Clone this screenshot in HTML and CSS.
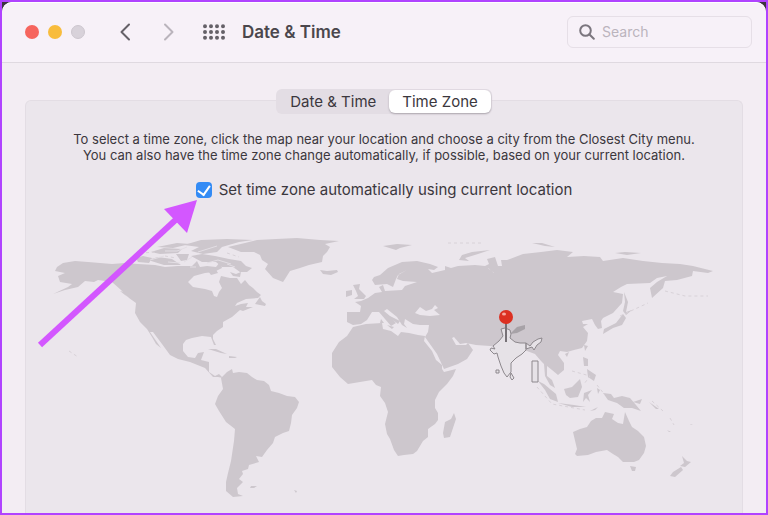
FILE: index.html
```html
<!DOCTYPE html>
<html lang="en">
<head>
<meta charset="utf-8">
<meta name="viewport" content="width=device-width, initial-scale=1">
<title>Date &amp; Time</title>
<link rel="stylesheet" href="styles.css">
</head>
<body>
<div class="frame">
<div class="window">
  <header class="toolbar">
    <div class="lights">
      <button class="light close" aria-label="Close"></button>
      <button class="light minimize" aria-label="Minimize"></button>
      <button class="light zoom" aria-label="Zoom" disabled></button>
    </div>
    <nav class="nav">
      <button class="icon-button" aria-label="Back"><svg width="12" height="18" viewBox="0 0 12 18"><path d="M10 1.500 2.500 9l7.500 7.500" /></svg></button>
      <button class="icon-button forward" aria-label="Forward"><svg width="12" height="18" viewBox="0 0 12 18"><path d="M2 1.500 9.500 9 2 16.500" /></svg></button>
    </nav>
    <button class="icon-button grid" aria-label="Show all">
      <svg width="22" height="16" viewBox="0 0 22 16"><path d="M2 2.300h18.500M2 8h18.500M2 13.700h18.500" /></svg>
    </button>
    <h1 class="title">Date &amp; Time</h1>
    <label class="search">
      <svg width="16" height="16" viewBox="0 0 16 16"><circle cx="6.500" cy="6.500" r="5.300"/><path d="m10.500 10.500 4.300 4.300"/></svg>
      <input type="search" placeholder="Search" aria-label="Search">
    </label>
  </header>
  <main class="content">
    <section class="panel">
      <div class="tabs" role="tablist">
        <button class="tab" role="tab" aria-selected="false">Date &amp; Time</button>
        <button class="tab selected" role="tab" aria-selected="true">Time Zone</button>
      </div>
      <p class="help">To select a time zone, click the map near your location and choose a city from the Closest City menu.<br>You can also have the time zone change automatically, if possible, based on your current location.</p>
      <label class="auto"><input type="checkbox" checked>Set time zone automatically using current location</label>
      <svg class="map" viewBox="26 214 716 298" role="img" aria-label="World map with India selected">
        <g class="land">
          <!-- North and Central America -->
          <path d="M57 267 63 263 75 261 88 262 112 264 125 263 138 264 155 265 165 267 178 266 192 266 197 261 200 267 207 266 216 267 220 262 222 268 214 272 205 273 194 276 188 282 193 287 205 289 212 291 214 296 217 297 219 292 222 288 219 282 221 276 230 278 237 278 241 284 245 280 249 285 253 288 257 292 261 295 258 298 246 299 237 303 235 306 241 304 248 303 246 307 253 307 243 311 240 310 232 317 223 322 223 327 217 331 213 335 213 339 216 345 214 345 211 337 202 336 192 338 186 340 183 344 183 351 188 357 195 358 198 353 204 352 201 360 209 362 209 372 215 376 219 374 223 378 218 377 213 377 205 368 190 362 178 359 170 355 162 344 153 332 150 332 161 348 156 344 152 337 147 329 140 322 135 313 136 303 129 298 121 290 112 282 98 280 94 282 85 281 78 287 65 290 53 294 68 287 72 284 60 282 58 276 65 273 55 271Z"/>
          <path d="M136 258 143 256 152 258 149 263 138 262ZM148 260 158 257 172 259 181 265 164 265ZM151 252 164 248 182 249 178 253 160 254ZM157 247 177 243 190 244 173 248ZM176 254 189 254 187 260 181 261ZM184 245 201 240 227 239 253 240 239 242 222 247 217 252 203 254 191 251 199 247ZM191 256 202 254 215 256 229 259 241 261 246 266 252 268 247 272 240 272 233 267 222 267 216 262 202 262ZM208 271 215 268 218 273 211 275ZM230 272 236 274 241 272 240 277 233 276ZM255 304 260 297 262 301 266 304 265 306Z"/>
          <path d="M208 349 216 349 227 354 221 353ZM229 356 237 357 235 358 229 358ZM240 358 243 358M120 291 124 292 128 297 125 295Z"/>
          <!-- Greenland and Iceland -->
          <path d="M228 247 245 243 257 240 276 239 297 238 320 240 339 241 325 244 330 247 327 252 323 256 322 262 309 265 300 268 290 271 285 279 283 282 273 278 265 269 268 264 262 260 260 255 254 252 241 252ZM320 270 327 271 337 270 338 272 331 275 323 274Z"/>
          <!-- South America -->
          <path d="m221 378 6-6 5-3 1 4 6-1 8 1 5 4 5 3 7 1 5 4 2 6 8 2 8 3 8 1 4 5-2 6-5 7-1 8-2 8-6 2-8 4-2 6-6 7-5 7-6-1 3 6-10 3-1 4-6 2 1 3-4 5 4 3-6 6 1 6 5 2-10 1-7-6 0-9 2-9 3-12 3-20 1-12-9-7-7-11-4-7 3-8 5-7ZM251 486 257 486 254 488 250 488ZM294 490 297 491 296 493Z"/>
          <!-- Africa and Madagascar -->
          <path d="m353 327 13-3 16-1 1 6 8 2 7 5 3-4 8 1 9 2 7 1-1 5 8 10 4 9 6 5 0 4 2 3 12-3-3 7-6 8-8 8-4 8 0 8 3 5 0 7-3 4-7 5 0 8-5 4-6 10-4 3-9 1-6 1-4-6-4-11-3-5-2-10 3-12-3-9-5-7 1-9-5-2-4-5-12 2-12 2-8-7-8-10 0-14 7-11 8-6ZM454 413 456 419 450 437 444 438 443 433 445 422 451 419Z"/>
          <!-- Eurasia -->
          <path fill-rule="evenodd" d="M347 312 360 312 361 306 355 302 361 301 368 298 375 293 382 292 379 287 383 285 385 291 402 290 405 286 417 282 403 281 397 279 399 274 407 270 398 275 396 279 393 287 387 284 375 285 372 280 374 277 380 275 388 268 402 262 417 261 430 264 438 267 434 270 428 269 432 273 445 270 445 266 451 268 458 266 475 265 485 266 489 264 487 259 495 257 498 266 502 266 501 260 507 260 523 254 541 252 557 250 573 252 567 257 584 256 600 257 603 261 623 258 643 261 662 263 680 264 693 266 713 271 708 273 693 271 692 276 677 280 665 281 663 288 652 298 650 288 657 282 667 276 657 278 650 283 627 284 621 287 613 292 623 294 622 303 613 313 603 318 601 321 602 328 598 329 595 325 592 319 582 321 583 324 588 324 583 327 588 333 587 341 582 348 574 350 567 352 560 351 558 355 564 363 564 370 558 375 552 370 547 366 547 376 552 380 555 388 550 385 545 376 544 364 541 361 535 354 527 351 490 346 476 345 466 343 460 344 454 337 452 338 456 345 466 345 468 343 473 350 467 359 458 364 444 369 437 354 425 337 428 332 429 325 420 325 413 324 405 319 404 324 407 328 402 325 397 317 387 309 384 311 390 316 400 321 398 324 393 320 396 323 391 326 385 319 379 312 372 312 367 320 361 324 353 325 347 322ZM415 313 420 307 426 311 432 309 435 305 438 308 434 310 440 315 430 316 420 315Z"/>
          <!-- Great Britain, Ireland and northern islands -->
          <path d="M353 285 360 284 359 289 366 296 364 299 354 299 358 296 356 291ZM346 291 352 290 352 295 346 297ZM383 246 397 244 412 245 400 248 396 250ZM459 260 462 255 472 252 490 250 478 254 465 258 469 261ZM532 243 542 243 555 247 545 246ZM615 253 625 252 641 253 627 255ZM381 319 384 323 380 323ZM387 325 394 327 392 329Z"/>
          <!-- Japan, Sakhalin and Southeast Asian islands -->
          <path d="M624 292 628 302 626 312 632 310 626 315 623 311 625 302ZM623 314 626 318 622 325 613 328 603 334 604 329 616 323ZM584 345 588 346 585 351ZM565 354 569 352 567 357ZM583 357 588 359 588 366 584 366ZM587 369 596 375 594 381 588 377ZM538 381 544 384 556 394 558 402 550 399 545 390ZM558 403 574 405 586 407 572 407ZM564 389 572 387 580 379 582 387 578 397 570 398 566 395ZM584 393 592 390 588 395 590 402 586 398 583 402ZM603 393 611 394 614 398 622 396 630 398 636 405 641 411 632 408 624 408 617 403 608 400ZM597 388 600 390 598 394ZM590 411 598 407 595 410ZM633 402 642 399 640 404ZM649 402 659 409 656 409Z"/>
          <!-- Australia and New Zealand -->
          <path d="M573 432 580 429 587 427 591 421 596 418 602 418 605 412 614 414 612 419 618 423 623 424 625 412 629 421 632 427 638 431 644 437 646 446 644 453 639 460 634 462 623 462 618 457 613 454 607 450 596 452 588 455 577 456 575 454 577 449ZM630 466 636 467 635 471 632 471ZM682 456 687 461 691 462 685 467 680 466 684 463ZM681 467 683 470 675 477 670 476 673 472ZM667 430 671 432 669 432ZM691 424 693 424 690 425Z"/>
        </g>
        <path class="islands" d="M652 401 663 411M670 418 674 425M69 351 78 357M620 316 648 303M665 291 685 296 708 296M448 243 482 243M572 371 590 376 584 384M537 387 552 404 585 410M597 385 605 395M488 268 494 273M140 253 158 252M165 256 176 258M227 253 239 257"/>
        <path class="water" d="M150 260 164 256M165 251 177 251 187 247M184 262 192 257M207 263 218 260 231 264M198 252 217 246M190 267 196 267M227 264 235 267M168 262 180 263"/>
        <!-- Selected time zone -->
        <path class="zone-shadow" d="M510 334 517 327 525 325 525 329 517 333Z"/>
        <g class="zone">
          <path d="M501 329 505 328 510 330 511 334 510 338 515 342 520 343 526 343 526 350 522 354 516 358 511 363 511 372 507 377 504 373 501 366 498 357 497 353 494 354 490 350 491 348 495 349 493 346 499 341 503 336ZM526 343 530 346 533 342 538 339 542 338 541 342 537 345 534 350 532 347 526 349ZM511 373 514 378 512 380 510 377ZM496 370h3v3h-3ZM532 361h6v21h-6Z"/>
        </g>
        <path class="needle" d="M506 323v19"/>
        <circle class="pin" cx="506" cy="317" r="7"/>
        <ellipse class="shine" cx="504" cy="314" rx="2" ry="1.500"/>
      </svg>
    </section>
  </main>
  <svg class="arrow" width="162" height="152" viewBox="36 196 162 152" aria-hidden="true"><path class="shaft" d="M40 345 182 214"/><path class="tip" d="M197 200 164 209 187 233Z"/></svg>
</div>
</div>
</body>
</html>
```
FILE: styles.css
```css
* {
  box-sizing: border-box;
}

body {
  margin: 0;
  background: #3d353f;
  color: #3b373d;
  font-family: Inter, "Liberation Sans", sans-serif;
}

button,
input {
  margin: 0;
  padding: 0;
  border: 0;
  background: none;
  color: inherit;
  font: inherit;
}

.frame {
  min-height: 100vh;
  display: flex;
  border: 2px solid #b043ff;
}

.window {
  position: relative;
  flex: 1;
  min-width: 0;
  display: flex;
  flex-direction: column;
  border-radius: 10px 10px 0 0;
  background: #f3edf3;
}

.toolbar {
  display: flex;
  align-items: center;
  height: 61px;
  padding: 0 14px 2px 23px;
  border-top: 1px solid #fff;
  border-bottom: 1px solid #dfd9e0;
  border-radius: 10px 10px 0 0;
  background: #f7f1f8;
}

.lights {
  display: flex;
  gap: 9px;
}

.light {
  width: 14px;
  height: 14px;
  border-radius: 50%;
}

.close {
  background: #f6655e;
}

.minimize {
  background: #f8bc3c;
}

.zoom {
  border: 1px solid #cdc7cf;
  background: #d8d2da;
}

.nav {
  display: flex;
  gap: 32px;
  margin-left: 34px;
}

.icon-button {
  display: flex;
  color: #656168;
}

.icon-button path {
  fill: none;
  stroke: currentColor;
  stroke-width: 2;
  stroke-linecap: round;
  stroke-linejoin: round;
}

.forward {
  color: #bab4bc;
}

.grid {
  margin-left: 28px;
}

.grid path {
  stroke-width: 4;
  stroke-dasharray: 0 6;
}

.title {
  flex: 1;
  margin: 0 0 0 17px;
  color: #4b474d;
  font-size: 17px;
  font-weight: 600;
}

.search {
  display: flex;
  align-items: center;
  gap: 7px;
  width: 185px;
  height: 32px;
  padding: 0 11px;
  border: 1px solid #e6dfe7;
  border-radius: 6px;
}

.search svg {
  flex: none;
  fill: none;
  stroke: #7b767e;
  stroke-width: 2;
  stroke-linecap: round;
}

.search input {
  min-width: 0;
  width: 100%;
  outline: 0;
  font-size: 14px;
}

.search input::placeholder {
  color: #bbb4bd;
  opacity: 1;
}

.content {
  flex: 1;
  display: flex;
  padding: 37px 23px 0;
}

.panel {
  flex: 1;
  min-width: 0;
  display: flex;
  flex-direction: column;
  align-items: center;
  border: 1px solid #e3dde4;
  border-bottom: 0;
  border-radius: 6px 6px 0 0;
  background: #ebe6ec;
}

.tabs {
  display: flex;
  margin-top: -12px;
  padding: 1px;
  border-radius: 6px;
  background: #e3dde4;
}

.tab {
  height: 23px;
  padding: 0 13px;
  border-radius: 6px;
  font-size: 15px;
}

.selected {
  background: #fff;
  box-shadow: 0 1px 2px #aaa4ac;
}

.help {
  margin: 17px 0 0;
  font-size: 13px;
  line-height: 16px;
  text-align: center;
}

.auto {
  display: flex;
  align-items: center;
  gap: 7px;
  margin-top: 17px;
  font-size: 15px;
  line-height: 20px;
}

.auto input {
  display: grid;
  place-items: center;
  width: 16px;
  height: 16px;
  border-radius: 4px;
  background: #338bf5;
  appearance: none;
}

.auto input:checked::after {
  content: "";
  width: 6px;
  height: 10px;
  margin-bottom: 2px;
  border: solid #fff;
  border-width: 0 2px 2px 0;
  transform: rotate(35deg);
}

.map {
  display: block;
  width: 100%;
  margin-top: 14px;
}

.land {
  fill: #cdc7cd;
}

.islands {
  fill: none;
  stroke: #d8d2d8;
  stroke-width: 1;
  stroke-dasharray: 3 3;
}

.water {
  fill: none;
  stroke: #e3dee4;
  stroke-width: 1;
}

.zone {
  fill: #e6e2e7;
  stroke: #8d888d;
  stroke-width: 1;
  stroke-linejoin: round;
}

.zone-shadow {
  fill: #8d888d;
  opacity: 0.6;
}

.needle {
  fill: none;
  stroke: #777277;
  stroke-width: 2;
}

.pin {
  fill: #dc3021;
}

.shine {
  fill: #f7a69c;
}

.arrow {
  position: absolute;
  top: 194px;
  left: 34px;
  pointer-events: none;
}

.shaft {
  fill: none;
  stroke: #d357ff;
  stroke-width: 6;
}

.tip {
  fill: #d357ff;
}
```
